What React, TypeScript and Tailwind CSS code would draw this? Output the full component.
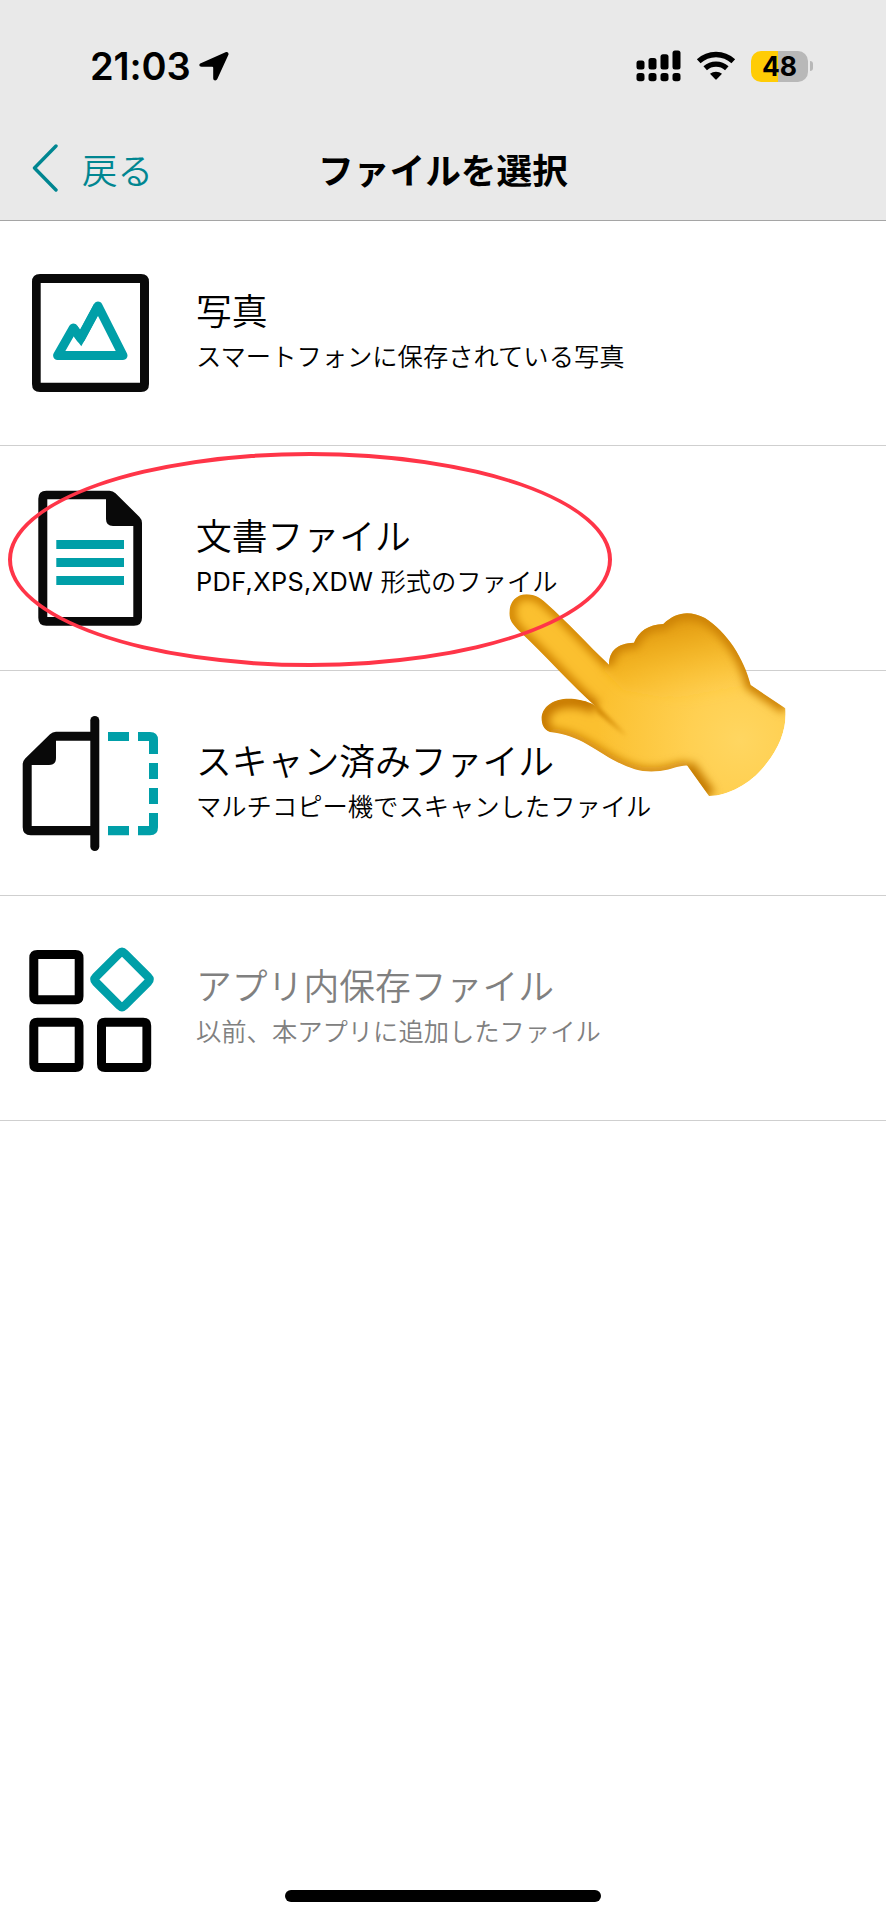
import React from 'react'

interface MenuItem {
  id: string
  title: string
  latin?: string
  description: string
  icon: React.ReactNode
  disabled?: boolean
}

const PhotoIcon = () => (
  <svg className="w-[170px] h-[224px]" viewBox="0 0 170 224" fill="none">
    <path fill="#090909" fillRule="evenodd" d="M40 53H141Q149 53 149 61V163Q149 171 141 171H40Q32 171 32 163V61Q32 53 40 53ZM40.7 62V161.7H140V62Z" />
    <path d="M57.6 134.5 73.3 107 80.7 117.5 98 85 123 134.5Z" stroke="#009fa8" strokeWidth="9" strokeLinejoin="round" />
    <path d="M73.3 107 80.7 117 98 85" stroke="#009fa8" strokeWidth="9" />
  </svg>
)

const DocumentIcon = () => (
  <svg className="w-[170px] h-[224px]" viewBox="0 0 170 224">
    <path fill="#090909" fillRule="evenodd" d="M46.3 44.7H109.5Q113 44.7 115.5 47.2L139.5 71Q142 73.5 142 77V171.7Q142 179.7 134 179.7H46.3Q38.3 179.7 38.3 171.7V52.7Q38.3 44.7 46.3 44.7ZM47.3 53.3V171H133.3V80H113Q106 80 106 73V53.3Z" />
    <path fill="#009fa8" d="M56.3 94H124V103H56.3ZM56.3 112H124V121H56.3ZM56.3 130H124V139H56.3Z" />
  </svg>
)

const ScanIcon = () => (
  <svg className="w-[170px] h-[224px]" viewBox="0 0 170 224" fill="none">
    <path fill="#090909" fillRule="evenodd" d="M95 60.7H56Q52.5 60.7 50 63.2L25.2 87.5Q22.7 90 22.7 93.5V156.3Q22.7 164.3 30.7 164.3H95ZM91 69.7V155H31.7V94H49Q56 94 56 87V69.7Z" />
    <path d="M94.8 49.5V175.5" stroke="#090909" strokeWidth="9" strokeLinecap="round" />
    <path fill="#009fa8" d="M108 61H129V70H108ZM108 155H129V164.3H108ZM149 92H158V108H149ZM149 117H158V133H149ZM138 61H150Q158 61 158 69V83H149V70H138ZM149 142H158V156.3Q158 164.3 150 164.3H138V155H149Z" />
  </svg>
)

const AppFilesIcon = () => (
  <svg className="w-[170px] h-[224px]" viewBox="0 0 170 224">
    <g fill="#000" fillRule="evenodd">
      <path id="tile" d="M37.3 54H75.5Q83.5 54 83.5 62V100.3Q83.5 108.3 75.5 108.3H37.3Q29.3 108.3 29.3 100.3V62Q29.3 54 37.3 54ZM38.3 63V99.3H74.7V63Z" />
      <use href="#tile" y="67.7" />
      <use href="#tile" x="67.7" y="67.7" />
    </g>
    <path fill="#009fa8" fillRule="evenodd" transform="rotate(45 122 83.5)" d="M105.5 58.9H138.5Q146.6 58.9 146.6 67V100Q146.6 108.1 138.5 108.1H105.5Q97.4 108.1 97.4 100V67Q97.4 58.9 105.5 58.9ZM106 67.5V99.5H138V67.5Z" />
  </svg>
)

const items: MenuItem[] = [
  { id: 'photo', title: '写真', description: 'スマートフォンに保存されている写真', icon: <PhotoIcon /> },
  { id: 'document', title: '文書ファイル', latin: 'PDF,XPS,XDW', description: '形式のファイル', icon: <DocumentIcon /> },
  { id: 'scan', title: 'スキャン済みファイル', description: 'マルチコピー機でスキャンしたファイル', icon: <ScanIcon /> },
  { id: 'app', title: 'アプリ内保存ファイル', description: '以前、本アプリに追加したファイル', icon: <AppFilesIcon />, disabled: true },
]

const StatusBar = () => (
  <div className="h-[120px] pt-[12px] pl-[90px] pr-[73px] flex items-center justify-between">
    <div className="flex items-center">
      <span className="w-[109px] font-['Inter'] font-semibold text-[38px] leading-none tracking-[-0.1px]">21:03</span>
      <svg className="w-[30px] h-[30px]" viewBox="0 0 30 30">
        <path d="M1.8 12.3 26.5 1.2C28.5.3 30.2 2 29.3 4L18.3 28C17.3 30.2 14.2 29.7 14.2 27.2V16.8Q14.2 15.8 13.2 15.8H2.6C.1 15.8-.5 13.3 1.8 12.3Z" />
      </svg>
    </div>
    <div className="flex items-center">
      <svg className="w-[45px] h-[32px]" viewBox="0 0 45 32">
        <rect x="0.5" y="10.5" width="8" height="9" rx="2.5" />
        <rect x="12.5" y="8" width="8" height="11.5" rx="2.5" />
        <rect x="24.5" y="4.3" width="8" height="15.2" rx="2.5" />
        <rect x="36.5" y="0.5" width="8" height="19" rx="2.5" />
        <rect x="0.5" y="23" width="8" height="8.3" rx="2.7" />
        <rect x="12.5" y="23" width="8" height="8.3" rx="2.7" />
        <rect x="24.5" y="23" width="8" height="8.3" rx="2.7" />
        <rect x="36.5" y="23" width="8" height="8.3" rx="2.7" />
      </svg>
      <svg className="ml-[15px] w-[40px] h-[30px]" viewBox="0 0 40 30" fill="none">
        <path d="M2.7 10.3C12.5 1.2 27.5 1.2 37.3 10.3" stroke="#000" strokeWidth="5.4" />
        <path d="M9.2 17.3C15.3 11.8 24.7 11.8 30.8 17.3" stroke="#000" strokeWidth="5.2" />
        <path fill="#000" d="M14 22.8C17.4 19.9 22.6 19.9 26 22.8L20.7 28.3Q20 29 19.3 28.3Z" />
      </svg>
      <div className="ml-[15px] w-[57px] h-[31px] rounded-[10px] bg-[linear-gradient(to_right,#ffcc05_48%,#b8b8b8_48%)] flex items-center justify-center font-['Inter'] font-bold text-[26.5px] leading-none">
        48
      </div>
      <div className="ml-[2px] w-[3px] h-[10px] rounded-r-full bg-[#b8b8b8]" />
    </div>
  </div>
)

const NavBar = () => (
  <div className="h-[100px] grid grid-cols-3 items-center pb-[4px]">
    <button className="flex items-center pl-[32px] text-[#008691]">
      <svg className="w-[26px] h-[48px]" viewBox="0 0 26 48" fill="none" stroke="currentColor" strokeWidth="3.4" strokeLinecap="round" strokeLinejoin="round">
        <path d="M24 2 2.5 24 24 46" />
      </svg>
      <span className="ml-[24px] pt-[1px] text-[35.5px] leading-none font-[350]">戻る</span>
    </button>
    <h1 className="pt-[2px] text-center text-[35.7px] leading-none font-bold whitespace-nowrap">ファイルを選択</h1>
  </div>
)

const MenuRow: React.FC<{ item: MenuItem }> = ({ item }) => (
  <li className={`h-[225px] flex border-b border-[#cfcfcf] font-[350] ${item.disabled ? 'text-[#808080]' : 'text-black'}`}>
    {item.icon}
    <div className="pl-[26px] pt-[68px] whitespace-nowrap">
      <p className="text-[35.8px] leading-[40px]">{item.title}</p>
      <p className="mt-[10px] text-[25.3px] leading-[32px]">
        {item.latin && <span className="mr-[7px] font-['Inter'] font-normal tracking-[0.4px]">{item.latin}</span>}
        {item.description}
      </p>
    </div>
  </li>
)

const HAND =
  'M58 130C58 95 80 73 110 73C135 73 152 85 167 98C235 158 290 220 357 284C357 243 382 219 432 218C445 185 475 163 520 162C560 124 600 122 645 144C710 185 762 265 782 345L886 415C892 470 870 530 830 580C790 635 720 678 657 678L592 587C570 585 550 598 510 603C460 608 430 600 380 575C320 545 270 495 180 486C160 480 154 460 155 440C160 400 210 376 270 390C295 395 310 402 318 410C245 345 165 255 90 185C68 165 58 150 58 130Z'

const PointingHand = () => (
  <svg className="absolute left-[490px] top-[570px] w-[320px] h-[250px]" viewBox="0 0 960 750" fill="none">
    <defs>
      <clipPath id="handClip"><path d={HAND} /></clipPath>
      <radialGradient id="handFill" cx="750" cy="510" r="430" gradientUnits="userSpaceOnUse">
        <stop offset="0" stopColor="#ffd661" />
        <stop offset="0.35" stopColor="#ffd052" />
        <stop offset="1" stopColor="#fbc02f" />
      </radialGradient>
      <linearGradient id="fistShade" x1="560" y1="130" x2="610" y2="400" gradientUnits="userSpaceOnUse">
        <stop offset="0" stopColor="#dc930c" />
        <stop offset="1" stopColor="#fbbd28" stopOpacity="0" />
      </linearGradient>
      <filter id="soft" x="-20%" y="-20%" width="140%" height="140%"><feGaussianBlur stdDeviation="13" /></filter>
      <filter id="crease" x="-50%" y="-50%" width="200%" height="200%"><feGaussianBlur stdDeviation="6" /></filter>
    </defs>
    <g clipPath="url(#handClip)">
      <path d={HAND} fill="url(#handFill)" />
      <path d="M340 300C357 243 382 219 432 218C445 185 475 163 520 162C560 124 600 122 645 144C710 185 762 265 782 345L660 410 400 360Z" fill="url(#fistShade)" filter="url(#soft)" />
      <g filter="url(#soft)">
        <path d="M318 410C245 345 165 255 90 185C45 145 55 73 110 73C135 73 152 85 167 98C235 158 290 220 357 284" stroke="#cf8205" strokeWidth="30" />
        <path d="M357 284C357 243 382 219 432 218C445 185 475 163 520 162C560 124 600 122 645 144C710 185 762 265 782 345L886 415" stroke="#c97d04" strokeWidth="32" />
        <path d="M657 678 592 587" stroke="#c47a05" strokeWidth="44" />
        <path d="M592 587C570 585 550 598 510 603C460 608 430 600 380 575C320 545 270 495 180 486" stroke="#d08607" strokeWidth="27" />
        <path d="M180 486C130 470 155 350 318 410" stroke="#c77905" strokeWidth="42" />
      </g>
      <path d="M300 385 412 500 325 430Z" fill="#cc8105" filter="url(#crease)" />
    </g>
  </svg>
)

const App: React.FC = () => {
  return (
    <div className="relative w-[886px] h-[1920px] overflow-hidden bg-white text-black font-['Noto_Sans_CJK_JP',sans-serif]">
      <header className="h-[221px] bg-[#e9e9e9] border-b border-[#a5a5a5]">
        <StatusBar />
        <NavBar />
      </header>

      <ul>
        {items.map((item) => (
          <MenuRow key={item.id} item={item} />
        ))}
      </ul>

      <PointingHand />
      <div className="absolute left-[8px] top-[452px] w-[604px] h-[215px] rounded-[50%] border-[4px] border-[#ff3548]" />

      <div className="absolute bottom-[18px] left-1/2 -translate-x-1/2 w-[316px] h-[12px] rounded-full bg-black" />
    </div>
  )
}

export default App
